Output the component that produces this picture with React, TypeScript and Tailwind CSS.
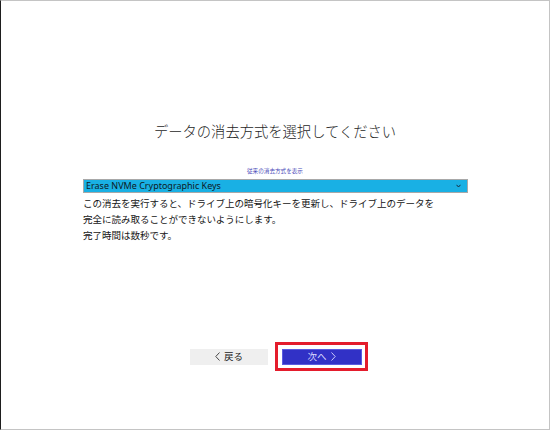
import React from "react";

const font = { fontFamily: '"Noto Sans", "Noto Sans CJK JP", sans-serif' };

function ChevronLeft({ color }: { color: string }) {
    return (
        <svg width="5" height="9" viewBox="0 0 5 9" fill="none">
            <path d="M4.5 0.5 L0.8 4.5 L4.5 8.5" stroke={color} strokeWidth="0.9" />
        </svg>
    );
}

function ChevronRight({ color }: { color: string }) {
    return (
        <svg width="5" height="9" viewBox="0 0 5 9" fill="none">
            <path d="M0.5 0.5 L4.2 4.5 L0.5 8.5" stroke={color} strokeWidth="0.9" />
        </svg>
    );
}

export default function App() {
    return (
        <div
            className="w-[550px] h-[430px] bg-white border-t border-t-[#c4c4c4] border-l border-l-[#1e1e1e] border-r border-r-[#c4c4c4] border-b border-b-[#c4c4c4] flex flex-col"
            style={font}
        >
            <h1 className="mt-[121px] text-center text-[14.3px] leading-[20px] text-[#1e1e1e] font-light">
                データの消去方式を選択してください
            </h1>

            <div className="mt-[25px] text-center text-[5.6px] leading-[8px] text-[#4a4ab8]">
                従来の消去方式を表示
            </div>

            <div className="ml-[82px] w-[385px] mt-[4px]">
                <div className="h-[14px] bg-[#19b0e4] border border-[#a8a8a8] flex items-center justify-between pl-[2px] pr-[6px]">
                    <span className="text-[9px] leading-[12px] text-[#0e1a24]">Erase NVMe Cryptographic Keys</span>
                    <svg width="5" height="4" viewBox="0 0 5 4" fill="none">
                        <path d="M0.5 0.8 L2.5 3 L4.5 0.8" stroke="#1a2a3a" strokeWidth="1" />
                    </svg>
                </div>
                <div className="mt-[3px] text-[9.5px] leading-[16px] text-[#141414]">
                    <p>この消去を実行すると、ドライブ上の暗号化キーを更新し、ドライブ上のデータを</p>
                    <p>完全に読み取ることができないようにします。</p>
                    <p>完了時間は数秒です。</p>
                </div>
            </div>

            <div className="mt-auto mb-[58px] pl-[189px] flex items-center gap-[7px]">
                <button className="w-[78px] h-[16px] bg-[#efefef] flex items-center justify-center gap-[4px] text-[9.5px] leading-[12px] text-[#222]">
                    <ChevronLeft color="#333" />
                    <span>戻る</span>
                </button>
                <div className="w-[93px] h-[29px] border-[3px] border-[#e41c2c] flex items-center justify-center">
                    <button className="w-[80px] h-[16px] bg-[#3131c6] border border-[#5a5ae0] flex items-center justify-center gap-[4px] text-[9.5px] leading-[12px] text-[#dcdcff]">
                        <span>次へ</span>
                        <ChevronRight color="#dcdcff" />
                    </button>
                </div>
            </div>
        </div>
    );
}
